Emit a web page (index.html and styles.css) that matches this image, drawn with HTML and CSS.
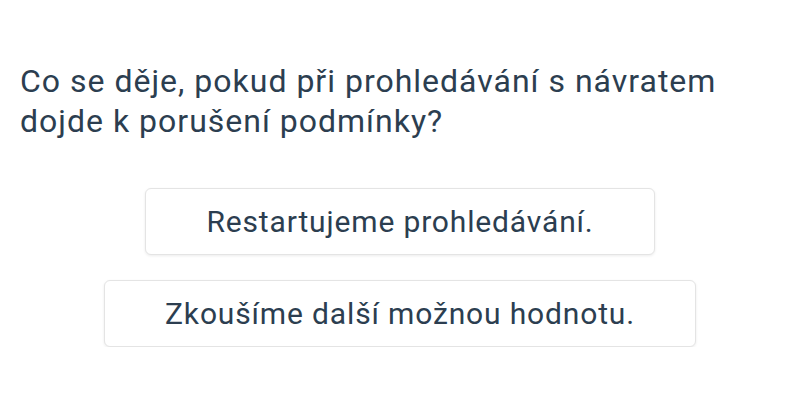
FILE: index.html
```html
<!DOCTYPE html>
<html lang="cs">
<head>
<meta charset="utf-8">
<link rel="stylesheet" href="styles.css">
</head>
<body>
<main class="quiz">
  <h1 class="question">Co se děje, pokud při prohledávání s návratem dojde k porušení podmínky?</h1>
  <div class="answers">
    <button class="answer">Restartujeme prohledávání.</button>
    <button class="answer">Zkoušíme další možnou hodnotu.</button>
  </div>
</main>
</body>
</html>
```
FILE: styles.css
```css
html, body {
  margin: 0;
  padding: 0;
  background: #ffffff;
}
body {
  font-family: Roboto, "Noto Sans", sans-serif;
  color: #2c3e50;
}
.quiz {
  padding: 61px 20px 0 20px;
}
.question {
  margin: 0;
  font-size: 32px;
  font-weight: 400;
  line-height: 40px;
  letter-spacing: 1px;
  max-width: 720px;
}
.answers {
  margin-top: 47px;
  display: flex;
  flex-direction: column;
  align-items: center;
  gap: 25px;
}
.answer {
  font-family: Roboto, "Noto Sans", sans-serif;
  font-size: 30px;
  letter-spacing: 0.85px;
  color: #2c3e50;
  background: #ffffff;
  border: 1px solid #e4e4e4;
  border-radius: 6px;
  box-shadow: 0 1px 3px rgba(0,0,0,0.08);
  padding: 14px 60px;
  line-height: 37px;
}
```
